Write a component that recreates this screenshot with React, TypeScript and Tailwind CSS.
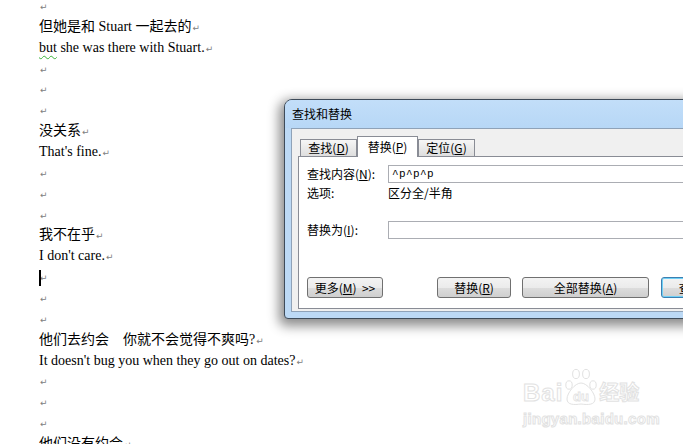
import React from 'react';

const docLines = [
  '',
  '但她是和 Stuart 一起去的',
  'BUT',
  '',
  '',
  '',
  '没关系',
  "That's fine.",
  '',
  '',
  '',
  '我不在乎',
  "I don't care.",
  'CURSOR',
  '',
  '',
  '他们去约会　你就不会觉得不爽吗?',
  "It doesn't bug you when they go out on dates?",
  '',
  '',
  '',
  '他们没有约会',
];

function Mark() {
  return <span className="ml-[1px] font-['DejaVu_Sans',sans-serif] text-[9px] text-[#808080]">↵</span>;
}

function DocLine({ text }: { text: string }) {
  if (text === 'BUT') {
    return (
      <div className="h-[20.86px] whitespace-pre">
        <span className="underline decoration-wavy decoration-[#3bb33b] decoration-1 underline-offset-[3px]">but</span>
        {' she was there with Stuart.'}
        <Mark />
      </div>
    );
  }
  if (text === 'CURSOR') {
    return (
      <div className="relative h-[20.86px] whitespace-pre">
        <span className="absolute left-0 top-[3px] h-[16px] w-[2px] bg-black" />
        <Mark />
      </div>
    );
  }
  return (
    <div className="h-[20.86px] whitespace-pre">
      {text}
      <Mark />
    </div>
  );
}

function Tab({ label, k, active }: { label: string; k: string; active?: boolean }) {
  if (active) {
    return (
      <div className="relative z-10 -mb-px flex h-[21px] w-[61px] items-start justify-center border border-b-0 border-[#898c95] bg-white pt-[1px]">
        {label}(<span className="underline">{k}</span>)
      </div>
    );
  }
  return (
    <div className="flex h-[17px] w-[57px] items-center justify-center border border-b-0 border-[#898c95] bg-gradient-to-b from-[#f6f6f6] to-[#dedede] leading-none">
      {label}(<span className="underline">{k}</span>)
    </div>
  );
}

function Btn({ children, w, main }: { children: React.ReactNode; w: string; main?: boolean }) {
  return (
    <div
      className={`flex h-[21px] shrink-0 items-center justify-center rounded-[3px] border bg-[linear-gradient(#f3f3f3_0%,#ebebeb_50%,#dddddd_51%,#cfcfcf_100%)] leading-none ${w} ${
        main ? 'border-[#3c7fb1] shadow-[inset_0_0_0_1px_#6fd0f6]' : 'border-[#707070]'
      }`}
    >
      {children}
    </div>
  );
}

function Watermark() {
  const stroke = '[-webkit-text-stroke:1px_#e2e2e2] text-transparent';
  return (
    <div className="absolute left-[523px] top-[368px] flex flex-col font-['Liberation_Sans','Noto_Sans_CJK_SC',sans-serif]">
      <div className="flex items-end">
        <span className={`text-[24px] font-bold leading-[26px] tracking-[1px] ${stroke}`}>Bai</span>
        <svg width="34" height="38" viewBox="0 0 34 38" className="mx-[1px]" fill="none" stroke="#e2e2e2" strokeWidth="1">
          <ellipse cx="5" cy="17" rx="3.2" ry="4.2" />
          <ellipse cx="12" cy="6" rx="3.4" ry="4.6" />
          <ellipse cx="22" cy="6" rx="3.4" ry="4.6" />
          <ellipse cx="29" cy="17" rx="3.2" ry="4.2" />
          <path d="M17 15 C 11 15, 3 25, 3 31 C 3 37, 10 37, 17 36 C 24 37, 31 37, 31 31 C 31 25, 23 15, 17 15 Z" />
          <text x="17" y="33" textAnchor="middle" fontSize="13" fontWeight="bold" fontFamily="Liberation Sans, sans-serif" fill="none" stroke="#e2e2e2" strokeWidth="0.8">du</text>
        </svg>
        <span className={`text-[20px] font-bold leading-[26px] ${stroke}`}>经验</span>
      </div>
      <span className={`mt-[5px] text-[15px] font-bold leading-[16px] tracking-[0.3px] ${stroke}`}>jingyan.baidu.com</span>
    </div>
  );
}

export default function App() {
  return (
    <div className="relative h-[444px] w-[683px] overflow-hidden bg-white">
      <div className="-mt-[4px] pl-[39px] font-['Liberation_Serif','Noto_Sans_CJK_SC',serif] text-[14px] leading-[20.86px] text-black">
        {docLines.map((t, i) => (
          <DocLine key={i} text={t} />
        ))}
      </div>

      <Watermark />

      {/* find & replace window */}
      <div className="absolute left-[284px] top-[99px] flex h-[220px] w-[470px] flex-col rounded-t-[8px] rounded-b-[4px] border border-[#3e4b59] bg-[#bcd9f5] shadow-[-2px_4px_12px_3px_rgba(0,0,0,0.45)] font-['Noto_Sans_CJK_SC','Liberation_Sans',sans-serif] text-[12px] text-black">
        <div className="flex h-[28px] shrink-0 items-center rounded-t-[7px] bg-gradient-to-b from-[#c2def9] to-[#b7d7f6] pl-[7px] leading-none">
          查找和替换
        </div>
        <div className="mx-[6px] mb-[6px] flex flex-1 flex-col border border-[#8fa2b8] bg-[#f0f0f0] pl-[6px] pt-[6px] pb-[2px]">
          <div className="flex h-[21px] items-end pl-[2px]">
            <Tab label="查找" k="D" />
            <Tab label="替换" k="P" active />
            <Tab label="定位" k="G" />
          </div>
          <div className="flex flex-1 flex-col border border-[#898c95] bg-white pl-[8px] pt-[8px]">
            <div className="flex h-[18px] items-center">
              <span className="w-[81px] shrink-0 leading-none">
                查找内容(<span className="underline">N</span>):
              </span>
              <div className="flex h-[18px] flex-1 items-center border border-[#abadb3] pl-[3px] font-['Liberation_Mono',monospace] text-[11px] tracking-[0.4px]">
                ^p^p^p
              </div>
            </div>
            <div className="mt-px flex h-[18px] items-center leading-none">
              <span className="w-[81px] shrink-0">选项:</span>
              <span>区分全/半角</span>
            </div>
            <div className="mt-[19px] flex h-[18px] items-center">
              <span className="w-[81px] shrink-0 leading-none">
                替换为(<span className="underline">I</span>):
              </span>
              <div className="h-[18px] flex-1 border border-[#abadb3]" />
            </div>
            <div className="mt-[38px] flex items-center">
              <Btn w="w-[76px]">
                更多(<span className="underline">M</span>)&nbsp;&nbsp;&gt;&gt;
              </Btn>
              <div className="ml-[54px]">
                <Btn w="w-[74px]">
                  替换(<span className="underline">R</span>)
                </Btn>
              </div>
              <div className="ml-[11px]">
                <Btn w="w-[127px]">
                  全部替换(<span className="underline">A</span>)
                </Btn>
              </div>
              <div className="ml-[12px]">
                <Btn w="w-[110px]" main>
                  查找下一处(<span className="underline">F</span>)
                </Btn>
              </div>
            </div>
          </div>
        </div>
      </div>
    </div>
  );
}
